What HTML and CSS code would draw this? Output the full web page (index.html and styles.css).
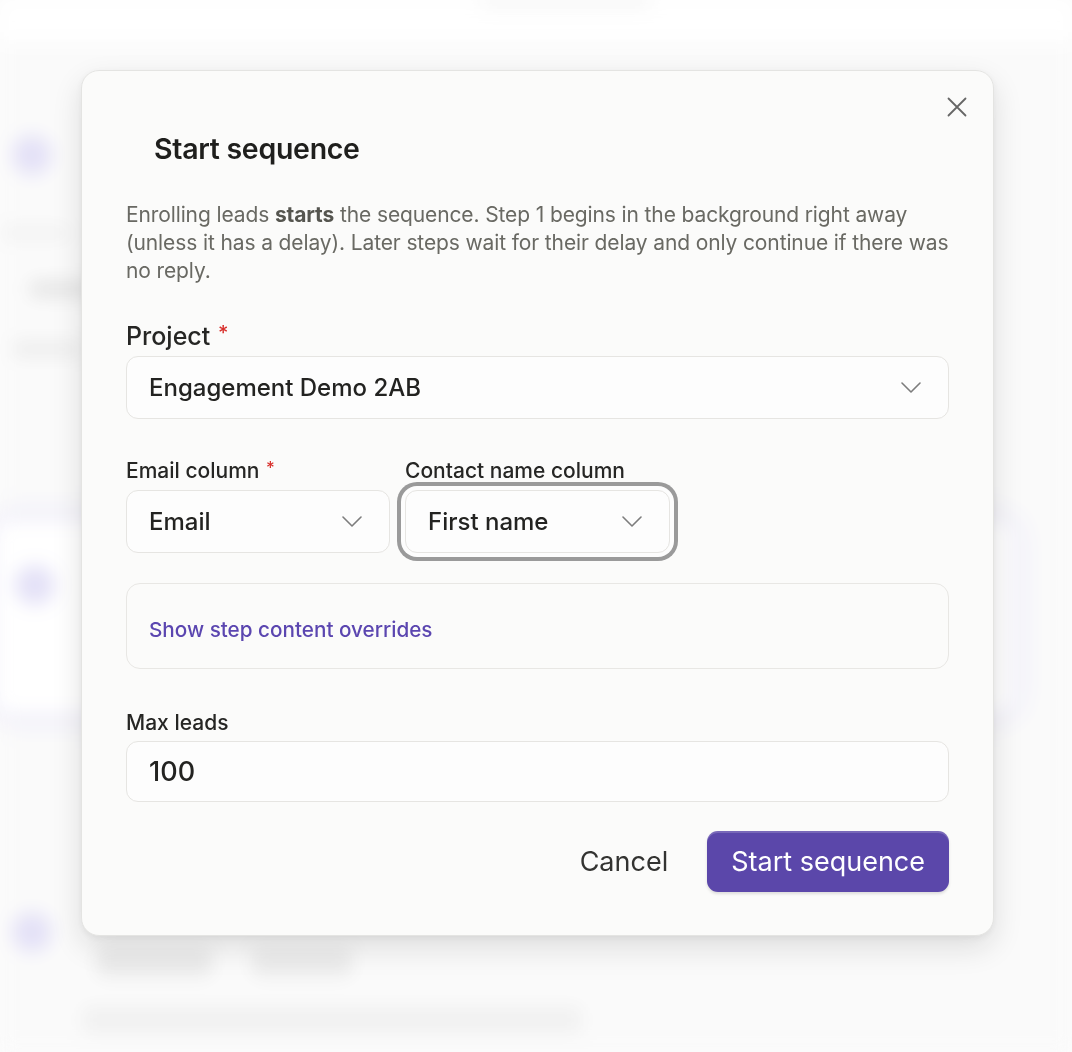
FILE: index.html
```html
<!DOCTYPE html>
<html lang="en">

<head>
    <meta charset="UTF-8">
    <meta name="viewport" content="width=device-width, initial-scale=1.0">
    <title>Start sequence</title>
    <link rel="stylesheet" href="styles.css">
</head>

<body>
    <!-- Blurred page behind the dialog -->
    <div class="backdrop" aria-hidden="true">
        <div class="bd-top"><span class="bd-tab"></span></div>
        <div class="bd-main">
            <div class="bd-row first">
                <span class="bd-avatar"></span>
            </div>
            <div class="bd-lines">
                <span class="bd-bar one"></span>
                <span class="bd-bar two"></span>
                <span class="bd-bar three"></span>
            </div>
            <div class="bd-card">
                <span class="bd-avatar"></span>
            </div>
            <div class="bd-row last">
                <span class="bd-avatar"></span>
                <div class="bd-foot">
                    <div class="bd-foot-row">
                        <span class="bd-bar four"></span>
                        <span class="bd-bar five"></span>
                    </div>
                    <span class="bd-bar six"></span>
                </div>
            </div>
        </div>
    </div>

    <!-- Dialog -->
    <div class="overlay">
        <div class="modal" role="dialog" aria-labelledby="modalTitle">
            <button class="close-btn" aria-label="Close">
                <svg width="20" height="20" viewBox="0 0 20 20" fill="none" stroke="#666" stroke-width="1.8"
                    stroke-linecap="round">
                    <path d="M1.5 1.5 L18.5 18.5 M18.5 1.5 L1.5 18.5" />
                </svg>
            </button>

            <h2 class="modal-title" id="modalTitle">Start sequence</h2>
            <p class="modal-desc">Enrolling leads <strong>starts</strong> the sequence. Step 1 begins in the background
                right away (unless it has a delay). Later steps wait for their delay and only continue if there was no
                reply.</p>

            <div class="field project">
                <label class="label-lg">Project <span class="req">*</span></label>
                <div class="select">
                    <span>Engagement Demo 2AB</span>
                    <svg class="chevron" width="20" height="11" viewBox="0 0 20 11" fill="none" stroke="#7d7d7d"
                        stroke-width="1.6" stroke-linecap="round" stroke-linejoin="round">
                        <path d="M1 1 L10 10 L19 1" />
                    </svg>
                </div>
            </div>

            <div class="columns">
                <div class="field">
                    <label class="label">Email column <span class="req">*</span></label>
                    <div class="select">
                        <span>Email</span>
                        <svg class="chevron" width="20" height="11" viewBox="0 0 20 11" fill="none" stroke="#7d7d7d"
                            stroke-width="1.6" stroke-linecap="round" stroke-linejoin="round">
                            <path d="M1 1 L10 10 L19 1" />
                        </svg>
                    </div>
                </div>
                <div class="field">
                    <label class="label">Contact name column</label>
                    <div class="select focused">
                        <span>First name</span>
                        <svg class="chevron" width="20" height="11" viewBox="0 0 20 11" fill="none" stroke="#7d7d7d"
                            stroke-width="1.6" stroke-linecap="round" stroke-linejoin="round">
                            <path d="M1 1 L10 10 L19 1" />
                        </svg>
                    </div>
                </div>
            </div>

            <div class="overrides">
                <a href="#" class="overrides-link">Show step content overrides</a>
            </div>

            <div class="field leads">
                <label class="label">Max leads</label>
                <div class="input">100</div>
            </div>

            <div class="actions">
                <button class="btn-cancel">Cancel</button>
                <button class="btn-primary">Start sequence</button>
            </div>
        </div>
    </div>
</body>

</html>
```

FILE: styles.css
```css
/* General Reset */
* {
    margin: 0;
    padding: 0;
    box-sizing: border-box;
}

body,
html {
    height: 100%;
    font-family: 'Inter', 'Noto Sans', sans-serif;
    background-color: #fafafa;
    color: #222;
    overflow: hidden;
}

/* Blurred background page */
.backdrop {
    height: 100vh;
    filter: blur(9px);
    background-color: #f8f8f8;
}

.bd-top {
    height: 42px;
    background-color: #fff;
    display: flex;
    justify-content: center;
}

.bd-tab {
    width: 170px;
    height: 8px;
    margin-left: 60px;
    background-color: #eee;
    border-radius: 4px;
}

.bd-main {
    padding-left: 12px;
}

.bd-avatar {
    display: block;
    width: 40px;
    height: 40px;
    border-radius: 50%;
    background-color: #d6d2f3;
    flex-shrink: 0;
}

.bd-row {
    display: flex;
    gap: 45px;
}

.bd-row.first {
    margin-top: 93px;
}

.bd-lines {
    display: flex;
    flex-direction: column;
    margin-top: 50px;
}

.bd-bar {
    display: block;
    height: 16px;
    border-radius: 6px;
    background-color: #e8e8e8;
}

.bd-bar.one {
    width: 70px;
    margin-left: -12px;
    background-color: #ededed;
}

.bd-bar.two {
    width: 62px;
    margin: 40px 0 0 18px;
    background-color: #d6d6d6;
}

.bd-bar.three {
    width: 70px;
    margin-top: 44px;
    background-color: #e4e4e4;
}

.bd-card {
    height: 200px;
    margin: 160px 55px 0 -20px;
    padding: 45px 0 0 20px;
    background-color: #fff;
    border: 3px solid #e0dcf6;
    border-radius: 20px;
    box-shadow: 0 0 26px rgba(120, 100, 220, 0.22);
}

.bd-row.last {
    margin-top: 195px;
}

.bd-foot {
    display: flex;
    flex-direction: column;
    gap: 30px;
    margin-top: 36px;
}

.bd-foot-row {
    display: flex;
    gap: 40px;
}

.bd-bar.four {
    width: 115px;
    height: 28px;
    background-color: #dedede;
}

.bd-bar.five {
    width: 100px;
    height: 28px;
    background-color: #e0e0e0;
}

.bd-bar.six {
    width: 500px;
    height: 28px;
    margin-left: -15px;
    background-color: #eaeaea;
}

/* Overlay with dialog */
.overlay {
    position: fixed;
    inset: 0;
    background-color: rgba(255, 255, 255, 0.35);
    padding: 70px 0 0 81px;
}

.modal {
    position: relative;
    width: 913px;
    padding: 60px 44px 43px;
    background-color: #fbfbfa;
    border: 1px solid #e4e4e2;
    border-radius: 18px;
    box-shadow: 0 12px 30px rgba(0, 0, 0, 0.12), 0 2px 6px rgba(0, 0, 0, 0.05);
}

.close-btn {
    position: absolute;
    top: 20px;
    right: 20px;
    width: 32px;
    height: 32px;
    display: flex;
    align-items: center;
    justify-content: center;
    background: transparent;
    border: none;
    cursor: pointer;
}

.modal-title {
    font-size: 28.5px;
    line-height: 36px;
    font-weight: 600;
    color: #1f1f1d;
    padding-left: 28px;
    letter-spacing: -0.01em;
}

.modal-desc {
    margin-top: 34px;
    font-size: 21px;
    line-height: 28px;
    letter-spacing: -0.12px;
    color: #696963;
}

.modal-desc strong {
    font-weight: 700;
    color: #55554f;
}

/* Form fields */
.field {
    display: flex;
    flex-direction: column;
}

.field.project {
    margin-top: 35px;
    gap: 4px;
}

.label-lg {
    font-size: 25px;
    line-height: 32px;
    font-weight: 500;
    color: #262624;
}

.label {
    font-size: 21px;
    line-height: 28px;
    font-weight: 500;
    color: #262624;
    white-space: nowrap;
}

.req {
    color: #d8302c;
    font-size: 0.8em;
    line-height: 0;
    vertical-align: 0.25em;
    margin-left: 1px;
}

.select,
.input {
    height: 63px;
    display: flex;
    align-items: center;
    justify-content: space-between;
    padding: 0 27px 0 22px;
    background-color: #fdfdfd;
    border: 1px solid #e6e5e2;
    border-radius: 12px;
    font-size: 24px;
    font-weight: 500;
    color: #232321;
}

.select.focused {
    box-shadow: 0 0 0 4px #fdfdfd, 0 0 0 8px #9a9a9a;
}

.chevron {
    flex-shrink: 0;
}

.columns {
    display: grid;
    grid-template-columns: 264px 265px;
    gap: 15px;
    margin-top: 38px;
}

.columns .field {
    gap: 5px;
}

.overrides {
    margin-top: 30px;
    height: 86px;
    padding: 32px 22px 0;
    border: 1px solid #e8e7e4;
    border-radius: 14px;
}

.overrides-link {
    font-size: 20.7px;
    line-height: 28px;
    font-weight: 500;
    color: #5b46b0;
    text-decoration: none;
}

.field.leads {
    margin-top: 40px;
    gap: 4px;
}

.input {
    height: 61px;
    font-size: 27px;
}

/* Footer buttons */
.actions {
    display: flex;
    justify-content: flex-end;
    align-items: center;
    gap: 17px;
    margin-top: 29px;
}

.btn-cancel {
    height: 61px;
    padding: 0 22px;
    background: transparent;
    border: none;
    font-family: inherit;
    font-size: 27px;
    color: #333331;
    cursor: pointer;
}

.btn-primary {
    height: 61px;
    padding: 0 24px;
    background-color: #5b47aa;
    border: none;
    border-radius: 11px;
    box-shadow: inset 0 2px 0 rgba(255, 255, 255, 0.18), 0 2px 3px rgba(0, 0, 0, 0.12);
    font-family: inherit;
    font-size: 27px;
    color: #fff;
    cursor: pointer;
}
```
